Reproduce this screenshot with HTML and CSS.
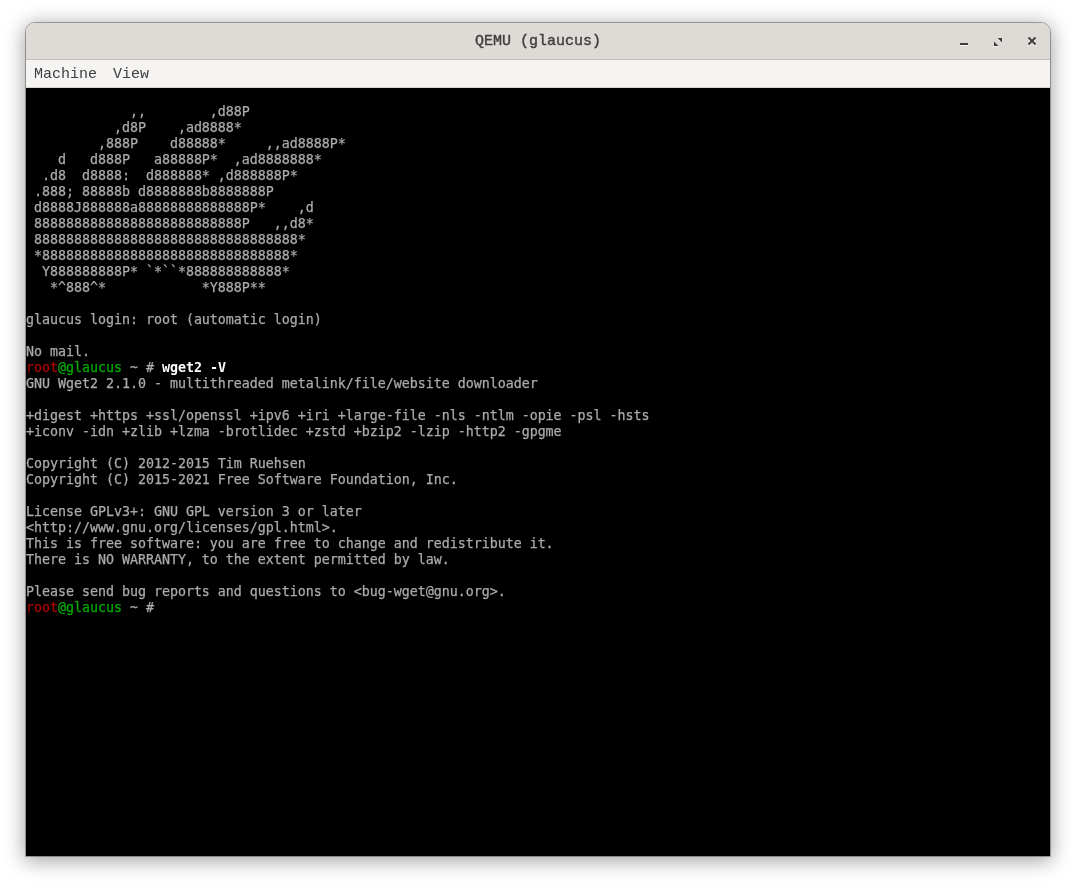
FILE: index.html
```html
<!DOCTYPE html>
<html lang="en">
<head>
<meta charset="utf-8">
<title>QEMU (glaucus)</title>
<link rel="stylesheet" href="styles.css">
</head>
<body>
<div class="window">
  <header class="titlebar">
    <div class="title">QEMU (glaucus)</div>
    <div class="controls">
      <svg class="ctl" width="10" height="11" viewBox="0 0 10 11"><rect x="1" y="7" width="8" height="2" fill="#3d3d3d"/></svg>
      <svg class="ctl" width="10" height="11" viewBox="0 0 10 11"><path d="M4.5 2H9V6.5L7 4.5V4H6.5ZM1 5.5L3 7.5V8H3.5L5.5 10H1Z" fill="#3d3d3d"/></svg>
      <svg class="ctl" width="10" height="11" viewBox="0 0 10 11"><path d="M1.5 1.5L8.5 8.5M8.5 1.5L1.5 8.5" stroke="#3d3d3d" stroke-width="2" fill="none"/></svg>
    </div>
  </header>
  <nav class="menubar"><span>Machine</span><span>View</span></nav>
  <pre class="console">             ,,        ,d88P
           ,d8P    ,ad8888*
         ,888P    d88888*     ,,ad8888P*
    d   d888P   a88888P*  ,ad8888888*
  .d8  d8888:  d888888* ,d888888P*
 .888; 88888b d8888888b8888888P
 d8888J888888a88888888888888P*    ,d
 88888888888888888888888888P   ,,d8*
 888888888888888888888888888888888*
 *8888888888888888888888888888888*
  Y888888888P* `*``*888888888888*
   *^888^*            *Y888P**

glaucus login: root (automatic login)

No mail.
<span class="red">root</span><span class="green">@glaucus</span> ~ # <b class="cmd">wget2 -V</b>
GNU Wget2 2.1.0 - multithreaded metalink/file/website downloader

+digest +https +ssl/openssl +ipv6 +iri +large-file -nls -ntlm -opie -psl -hsts
+iconv -idn +zlib +lzma -brotlidec +zstd +bzip2 -lzip -http2 -gpgme

Copyright (C) 2012-2015 Tim Ruehsen
Copyright (C) 2015-2021 Free Software Foundation, Inc.

License GPLv3+: GNU GPL version 3 or later
&lt;http://www.gnu.org/licenses/gpl.html&gt;.
This is free software: you are free to change and redistribute it.
There is NO WARRANTY, to the extent permitted by law.

Please send bug reports and questions to &lt;bug-wget@gnu.org&gt;.
<span class="red">root</span><span class="green">@glaucus</span> ~ #</pre>
</div>
</body>
</html>
```

FILE: styles.css
```css
html, body {
  margin: 0;
  height: 100%;
  background: #ffffff;
}
body {
  padding: 23px 26px 29px;
  box-sizing: border-box;
  overflow: hidden;
}
.window {
  width: 1024px;
  height: 833px;
  display: flex;
  flex-direction: column;
  border-radius: 9px 9px 0 0;
  outline: 1px solid rgba(0, 0, 0, 0.3);
  box-shadow: 0 3px 20px 2px rgba(0, 0, 0, 0.36);
  overflow: hidden;
}
.titlebar {
  height: 36px;
  flex: none;
  display: flex;
  align-items: center;
  justify-content: center;
  position: relative;
  background: #dedbd7;
  border-bottom: 1px solid #c3bfb8;
}
.title {
  padding-top: 1px;
  font: 400 15px "Liberation Mono", monospace;
  -webkit-text-stroke: 0.4px #3d3d3d;
  color: #3d3d3d;
  opacity: 0.99;
}
.controls {
  position: absolute;
  right: 13px;
  top: 13px;
  display: flex;
  gap: 24px;
}
.ctl {
  display: block;
  filter: drop-shadow(0 1px 0 rgba(255, 255, 255, 0.75));
}
.menubar {
  height: 28px;
  flex: none;
  box-sizing: border-box;
  display: flex;
  align-items: center;
  gap: 16px;
  padding: 1px 0 0 8px;
  background: #f5f4f2;
  border-bottom: 1px solid #d8d5d1;
  font: 15px "Liberation Mono", monospace;
  color: #3d3d3d;
}
.menubar span {
  opacity: 0.99;
}
.console {
  flex: 1;
  margin: 0;
  padding: 16px 0 0;
  background: #000000;
  color: #aaaaaa;
  font: 13.333px/16px "DejaVu Sans Mono", monospace;
  letter-spacing: -0.03px;
  -webkit-text-stroke: 0.25px currentColor;
  overflow: hidden;
  opacity: 0.999;
}
.red { color: #aa0000; }
.green { color: #00aa00; }
.cmd { color: #ffffff; font-weight: 700; -webkit-text-stroke: 0; }
```
